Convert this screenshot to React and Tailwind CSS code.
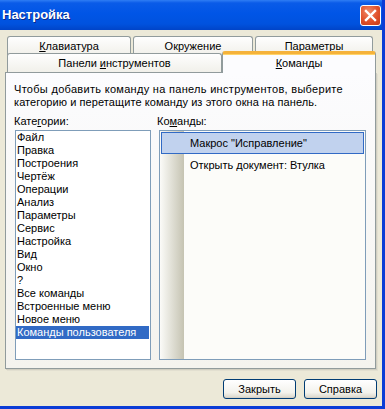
import React from 'react'

const categories = [
  'Файл', 'Правка', 'Построения', 'Чертёж', 'Операции', 'Анализ', 'Параметры', 'Сервис',
  'Настройка', 'Вид', 'Окно', '?', 'Все команды', 'Встроенные меню', 'Новое меню', 'Команды пользователя',
]

const BackTab = ({ w, children }) => (
  <div className={`${w} h-[19px] shrink-0 flex justify-center pt-[3px] leading-[13px] border border-b-0 border-[#919b9c] rounded-t-[3px] bg-[linear-gradient(#fefefe,#f1f0ea)]`}>
    {children}
  </div>
)

const Button = ({ children }) => (
  <button className="w-[73px] h-[20px] flex items-center justify-center leading-none border border-[#003c74] rounded-[3px] bg-[linear-gradient(#ffffff,#f3f2ec_70%,#d9d5c9)] shadow-[inset_0_-1px_0_#d6d0c5]">
    {children}
  </button>
)

export default function App() {
  return (
    <div className="w-[385px] h-[409px] flex flex-col overflow-hidden bg-[#ece9d8] border-r-[3px] border-b-[3px] border-[#0b3cd6] font-['Liberation_Sans',Arial,sans-serif] text-[11px] text-black">
      {/* title bar */}
      <div className="h-[30px] shrink-0 flex items-center justify-between pl-[2px] pr-[1px] bg-[linear-gradient(#2f7df4_0%,#0a5be8_10%,#0055e6_45%,#0052de_80%,#0044c8_100%)]">
        <span className="font-bold text-[13px] text-white [text-shadow:1px_1px_0_#0a2a8a]">Настройка</span>
        <div className="w-[21px] h-[21px] flex items-center justify-center rounded-[3px] border border-white bg-[radial-gradient(circle_at_40%_30%,#f08a6a,#e0502a_55%,#c23a18)]">
          <svg width="13" height="13" viewBox="0 0 13 13">
            <path d="M2 2 L11 11 M11 2 L2 11" stroke="white" strokeWidth="2.4" strokeLinecap="square" />
          </svg>
        </div>
      </div>

      <div className="flex-1 flex flex-col pl-[5px] pt-[6px]">
        {/* tabs */}
        <div className="flex gap-[2px] pl-[2px]">
          <BackTab w="w-[124px]"><span><u>К</u>лавиатура</span></BackTab>
          <BackTab w="w-[120px]"><span>Окружение</span></BackTab>
          <BackTab w="w-[118px]"><span>П<u>а</u>раметры</span></BackTab>
        </div>
        <div className="relative z-10 flex items-end pl-[2px] h-[21px] -mt-[4px]">
          <div className="w-[215px] h-[19px] flex items-center justify-center leading-[13px] border border-b-0 border-[#919b9c] rounded-t-[3px] bg-[linear-gradient(#fefefe,#f1f0ea)]">
            <span>Панели <u>и</u>нструментов</span>
          </div>
          <div className="w-[154px] h-[22px] -mb-[1px] flex items-center justify-center leading-[13px] border-x border-[#919b9c] border-t-[3px] border-t-[#f5b23a] rounded-t-[3px] bg-[#fcfcfe] shadow-[inset_0_1px_0_#ffd46a]">
            <span><u>К</u>оманды</span>
          </div>
        </div>

        {/* tab pane */}
        <div className="w-[371px] h-[297px] shrink-0 flex flex-col pl-[8px] border border-[#919b9c] bg-[linear-gradient(#fcfcfe,#f4f3ee)] shadow-[1px_1px_0_#d0cec1,2px_2px_0_#e2dfd0]">
          <div className="pt-[10px] leading-[13px] whitespace-nowrap">
            <div className="tracking-[0.3px]">Чтобы добавить команду на панель инструментов, выберите</div>
            <div className="tracking-[0.08px]">категорию и перетащите команду из этого окна на панель.</div>
          </div>
          <div className="mt-[6px] grid grid-cols-[137px_208px] gap-x-[7px]">
            <div className="leading-[13px]">Кате<u>г</u>ории:</div>
            <div className="leading-[13px] -ml-px">Ко<u>м</u>анды:</div>

            <div className="mt-[2px] ml-px h-[230px] border border-[#7f9db9] bg-white overflow-hidden">
              {categories.map((c, i) => (
                <div
                  key={c}
                  className={`w-[133px] h-[13px] pl-[1px] leading-[13px] whitespace-nowrap ${i === categories.length - 1 ? 'bg-[#316ac5] text-white' : ''}`}
                >
                  {c}
                </div>
              ))}
            </div>

            <div className="mt-[2px] ml-px h-[230px] border border-[#7f9db9] bg-[linear-gradient(to_right,#fbfbf8,#c5c3b2_24px,#fcfcf9_24px)] pt-[1px] px-[1px]">
              <div className="h-[22px] flex items-center pl-[28px] border border-[#316ac5] bg-[#c1d2ee]">
                Макрос "Исправление"
              </div>
              <div className="h-[22px] flex items-center pl-[28px] border border-transparent">
                Открыть документ: Втулка
              </div>
            </div>
          </div>
        </div>

        {/* buttons */}
        <div className="mt-[10px] flex justify-end gap-[8px] pr-[5px]">
          <Button>Закрыть</Button>
          <Button>Справка</Button>
        </div>
      </div>
    </div>
  )
}
